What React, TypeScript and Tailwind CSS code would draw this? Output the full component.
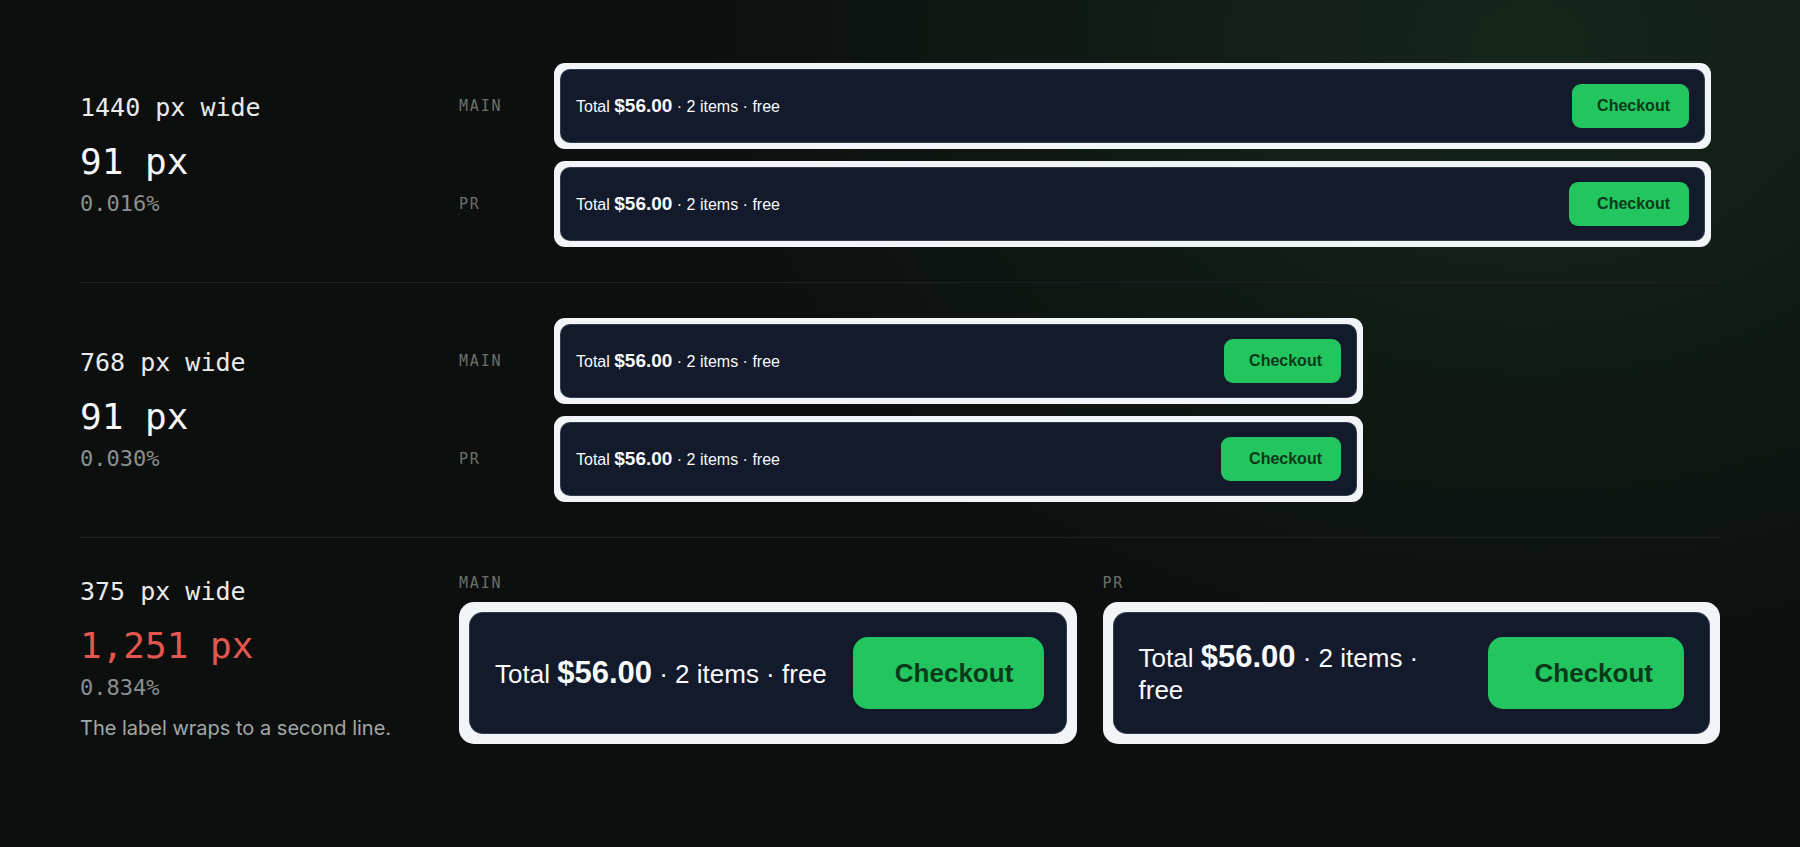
import React from "react";

type Size = "sm" | "lg";
type Variant = "main" | "pr";

const mono = "font-['DejaVu_Sans_Mono',monospace]";

const sizes = {
  sm: {
    frame: "p-[6px] rounded-[11px]",
    inner: "rounded-[10px] px-[15px] py-[14px] gap-[20px]",
    text: "text-[16px] leading-[20px]",
    price: "text-[19px]",
    button: "h-[44px] rounded-[9px] text-[16px] pr-[19px]",
    main: "pl-[25px]",
    pr: "pl-[28px]",
  },
  lg: {
    frame: "p-[10px] rounded-[15px]",
    inner: "rounded-[14px] px-[25px] py-[24px] gap-[26px]",
    text: "text-[26px] leading-[32px]",
    price: "text-[31px]",
    button: "h-[72px] rounded-[15px] text-[26px] pr-[31px]",
    main: "pl-[42px]",
    pr: "pl-[47px]",
  },
};

function CheckoutBar({
  size,
  variant,
  wrapped = false,
  className = "",
}: {
  size: Size;
  variant: Variant;
  wrapped?: boolean;
  className?: string;
}) {
  const s = sizes[size];
  return (
    <div className={`bg-[#f1f5f8] ${s.frame} ${className}`}>
      <div
        className={`flex items-center justify-between bg-[#131a2b] border border-[#4a5365]/60 font-['Liberation_Sans',Arial,sans-serif] text-[#f8fafc] ${s.inner}`}
      >
        <div className={`${s.text} ${wrapped ? "" : "whitespace-nowrap"}`}>
          Total <span className={`font-bold ${s.price}`}>$56.00</span> · 2 items ·
          {wrapped ? <br /> : " "}
          free
        </div>
        <button
          className={`shrink-0 flex items-center bg-[#22c55e] text-[#0a3a1a] font-bold ${s.button} ${
            variant === "main" ? s.main : s.pr
          }`}
        >
          Checkout
        </button>
      </div>
    </div>
  );
}

function Stats({
  width,
  diff,
  pct,
  bad = false,
  note,
}: {
  width: string;
  diff: string;
  pct: string;
  bad?: boolean;
  note?: string;
}) {
  return (
    <div className="flex flex-col">
      <div className={`${mono} text-[25px] leading-[32px] text-[#e9ebeb]`}>{width}</div>
      <div
        className={`${mono} mt-4 text-[36px] leading-[44px] ${
          bad ? "text-[#e5574e]" : "text-[#f6f7f7]"
        }`}
      >
        {diff}
      </div>
      <div className={`${mono} mt-1.5 text-[22px] leading-[28px] text-[#8b908f]`}>{pct}</div>
      {note && (
        <div className="mt-3 font-['Inter',sans-serif] text-[20px] leading-[28px] text-[#a2a7a6]">
          {note}
        </div>
      )}
    </div>
  );
}

function Tag({ children, className = "" }: { children: React.ReactNode; className?: string }) {
  return (
    <div
      className={`${mono} text-[15px] leading-[20px] tracking-[0.12em] text-[#6b706f] ${className}`}
    >
      {children}
    </div>
  );
}

export default function App() {
  return (
    <div className="min-h-screen w-full bg-[#0c0f0e] bg-[radial-gradient(ellipse_60%_95%_at_85%_5%,rgba(30,62,40,0.5),rgba(12,15,14,0)_78%)] px-20 pt-[28px]">
      <div className="divide-y divide-[#1d2221]">
        {/* desktop */}
        <section className="grid grid-cols-[379px_1fr] items-center py-[35px]">
          <Stats width="1440 px wide" diff="91 px" pct="0.016%" />
          <div className="flex flex-col gap-3">
            <div className="flex items-center">
              <Tag className="w-[95px]">MAIN</Tag>
              <CheckoutBar size="sm" variant="main" className="w-[1157px]" />
            </div>
            <div className="flex items-center">
              <Tag className="w-[95px]">PR</Tag>
              <CheckoutBar size="sm" variant="pr" className="w-[1157px]" />
            </div>
          </div>
        </section>

        {/* tablet */}
        <section className="grid grid-cols-[379px_1fr] items-center py-[35px]">
          <Stats width="768 px wide" diff="91 px" pct="0.030%" />
          <div className="flex flex-col gap-3">
            <div className="flex items-center">
              <Tag className="w-[95px]">MAIN</Tag>
              <CheckoutBar size="sm" variant="main" className="w-[809px]" />
            </div>
            <div className="flex items-center">
              <Tag className="w-[95px]">PR</Tag>
              <CheckoutBar size="sm" variant="pr" className="w-[809px]" />
            </div>
          </div>
        </section>

        {/* mobile */}
        <section className="grid grid-cols-[379px_1fr] items-center py-[35px]">
          <Stats
            width="375 px wide"
            diff="1,251 px"
            pct="0.834%"
            bad
            note="The label wraps to a second line."
          />
          <div className="grid grid-cols-2 gap-[26px]">
            <div>
              <Tag className="mb-[9px]">MAIN</Tag>
              <CheckoutBar size="lg" variant="main" />
            </div>
            <div>
              <Tag className="mb-[9px]">PR</Tag>
              <CheckoutBar size="lg" variant="pr" wrapped />
            </div>
          </div>
        </section>
      </div>
    </div>
  );
}
